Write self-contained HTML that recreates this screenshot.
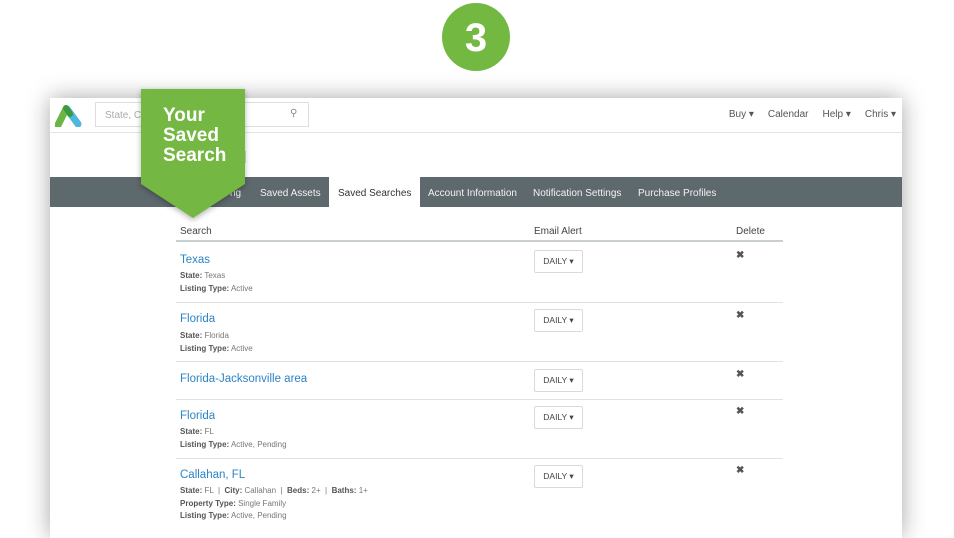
<!DOCTYPE html>
<html><head><style>
*{margin:0;padding:0;box-sizing:border-box}
body{width:954px;height:520px;background:#fff;font-family:"Liberation Sans",sans-serif;position:relative;overflow:hidden}
.circ{position:absolute;left:442px;top:3px;width:68px;height:68px;border-radius:50%;background:#72b841;color:#fff;font-weight:bold;font-size:40px;text-align:center;line-height:70px}
.win{position:absolute;left:50px;top:98px;width:852px;height:440px;background:#fff;box-shadow:0 0 22px rgba(0,0,0,.35)}
.hdr{position:absolute;left:0;top:0;width:852px;height:35px;border-bottom:1px solid #e2e4e5}
.search{position:absolute;left:45px;top:4px;width:214px;height:25px;border:1px solid #dcdedf;font-size:10px;color:#aaa;padding:7px 9px}
.menu{position:absolute;right:6px;top:11px;font-size:10px;color:#555}
.menu span{margin-left:14px}
.nav{position:absolute;left:0;top:79px;width:852px;height:30px;background:#5e696e}
.nav div{position:absolute;top:0;height:30px;line-height:33px;font-size:10px;color:#f2f2f2}
.nav .act{background:#fff;color:#333;padding:0 9px}
.t{position:absolute;font-size:10px}
.hd{color:#444;top:128px}
.row{position:absolute;left:126px;width:607px;border-top:1px solid #dfe3e4}
.name{position:absolute;left:130px;color:#2b84c6;font-size:11.5px}
.det{position:absolute;left:130px;font-size:8px;color:#777;line-height:12.5px}
.det b{color:#555}
.dd{position:absolute;left:484px;width:49px;height:23px;border:1px solid #d8dadb;border-radius:2px;font-size:8.5px;color:#444;text-align:center;line-height:21px}
.x{position:absolute;left:686px;font-size:10px;color:#555;font-weight:bold}
.badge{position:absolute;left:141px;top:89px;width:104px;height:129px}
.badge .txt{position:absolute;left:22px;top:17px;color:#fff;font-size:19px;font-weight:bold;line-height:20px}
</style></head><body>
<div class="circ">3</div>
<div class="win">
 <div class="hdr">
  <svg style="position:absolute;left:5px;top:5px" width="28" height="24" viewBox="0 0 28 24"><path d="M3 22 L11 6" stroke="#6ab544" stroke-width="7" stroke-linecap="round"/><path d="M12 6 L23 21" stroke="#4fb6df" stroke-width="7" stroke-linecap="round"/><path d="M11 5 L15 11" stroke="#3c9a3a" stroke-width="6" stroke-linecap="round"/></svg>
  <div class="search">State, C<span style="position:absolute;left:194px;top:5px;color:#888">&#9906;</span></div>
  <div class="menu">Buy &#9662;<span>Calendar</span><span>Help &#9662;</span><span>Chris &#9662;</span></div>
 </div>
 <div style="position:absolute;left:186px;top:50px;font-size:17px;color:#333;font-weight:bold">d</div>
 <div class="nav">
  <div style="left:180px">ng</div>
  <div style="left:210px">Saved Assets</div>
  <div class="act" style="left:279px">Saved Searches</div>
  <div style="left:378px">Account Information</div>
  <div style="left:483px">Notification Settings</div>
  <div style="left:588px">Purchase Profiles</div>
 </div>
 <div class="t hd" style="left:130px">Search</div>
 <div class="t hd" style="left:484px">Email Alert</div>
 <div class="t hd" style="left:686px">Delete</div>
 <div class="row" style="top:142px;border-top:2px solid #c9cfd1"></div>

 <div class="name" style="top:156px">Texas</div>
 <div class="det" style="top:172px"><b>State:</b> Texas<br><b>Listing Type:</b> Active</div>
 <div class="dd" style="top:152px">DAILY &#9662;</div><div class="x" style="top:152px">&#10006;</div>
 <div class="row" style="top:204px"></div>

 <div class="name" style="top:215px">Florida</div>
 <div class="det" style="top:232px"><b>State:</b> Florida<br><b>Listing Type:</b> Active</div>
 <div class="dd" style="top:211px">DAILY &#9662;</div><div class="x" style="top:212px">&#10006;</div>
 <div class="row" style="top:263px"></div>

 <div class="name" style="top:275px">Florida-Jacksonville area</div>
 <div class="dd" style="top:271px">DAILY &#9662;</div><div class="x" style="top:271px">&#10006;</div>
 <div class="row" style="top:301px"></div>

 <div class="name" style="top:312px">Florida</div>
 <div class="det" style="top:328px"><b>State:</b> FL<br><b>Listing Type:</b> Active, Pending</div>
 <div class="dd" style="top:308px">DAILY &#9662;</div><div class="x" style="top:308px">&#10006;</div>
 <div class="row" style="top:360px"></div>

 <div class="name" style="top:371px">Callahan, FL</div>
 <div class="det" style="top:387px"><b>State:</b> FL &nbsp;|&nbsp; <b>City:</b> Callahan &nbsp;|&nbsp; <b>Beds:</b> 2+ &nbsp;|&nbsp; <b>Baths:</b> 1+<br><b>Property Type:</b> Single Family<br><b>Listing Type:</b> Active, Pending</div>
 <div class="dd" style="top:367px">DAILY &#9662;</div><div class="x" style="top:367px">&#10006;</div>
</div>
<div class="badge">
 <svg width="104" height="129" style="position:absolute;left:0;top:0;filter:drop-shadow(0 2px 3px rgba(0,0,0,.3))"><path d="M0 0 H104 V95 L52 129 L0 95 Z" fill="#74b743"/></svg>
 <div class="txt">Your<br>Saved<br>Search</div>
</div>
</body></html>
